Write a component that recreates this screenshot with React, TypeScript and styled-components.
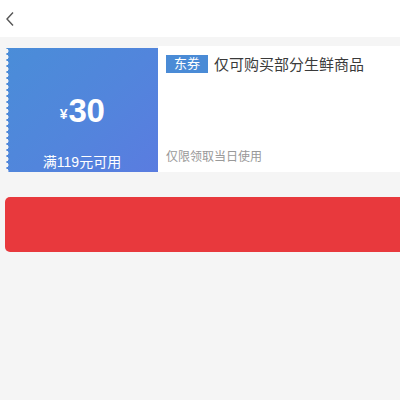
import React from "react";
import styled, { createGlobalStyle } from "styled-components";

const GlobalStyle = createGlobalStyle`
  html, body {
    margin: 0;
    padding: 0;
    background: #f5f5f5;
    font-family: "Liberation Sans", "Noto Sans CJK SC", sans-serif;
  }
`;

const Page = styled.div`
  width: 400px;
  height: 400px;
  background: #f5f5f5;
  overflow: hidden;
`;

const Header = styled.div`
  height: 37px;
  background: #ffffff;
  display: flex;
  align-items: center;
  padding-left: 5px;
`;

const BackButton = styled.button`
  border: none;
  background: transparent;
  padding: 0;
  width: 14px;
  height: 20px;
  display: flex;
  align-items: center;
  cursor: pointer;
`;

const Coupon = styled.div`
  display: flex;
  margin: 11px 0 0 6px;
  height: 124px;
`;

// blue left part with a scalloped edge
const Amount = styled.div`
  position: relative;
  width: 152px;
  flex-shrink: 0;
  background: linear-gradient(135deg, #4a8dd8 0%, #5285dc 55%, #5a7ce0 100%);
  color: #ffffff;
  display: flex;
  flex-direction: column;
  align-items: center;

  &::before {
    content: "";
    position: absolute;
    left: 0;
    top: 0;
    bottom: 0;
    width: 4px;
    background-image: radial-gradient(circle at 0 3px, #f5f5f5 2.2px, transparent 2.8px);
    background-size: 4px 6px;
    background-repeat: repeat-y;
  }
`;

const Price = styled.div`
  margin-top: 44px;
  display: flex;
  align-items: baseline;
  font-family: "Liberation Sans", sans-serif;
  font-weight: bold;
`;

const Currency = styled.span`
  font-size: 14px;
  margin-right: 1px;
  position: relative;
  top: -3px;
`;

const Value = styled.span`
  font-size: 33px;
  letter-spacing: -0.5px;
`;

const Condition = styled.div`
  margin-top: auto;
  margin-bottom: 1px;
  font-size: 14px;
  line-height: 18px;
`;

const Info = styled.div`
  flex: 1;
  background: #ffffff;
  margin-top: -2px;
  padding: 7px 8px 8px 8px;
  display: flex;
  flex-direction: column;
`;

const TitleRow = styled.div`
  display: flex;
  align-items: center;
`;

const Tag = styled.span`
  background: #4a8bd6;
  color: #ffffff;
  font-size: 13px;
  line-height: 18px;
  padding: 0 8px;
  margin-right: 6px;
`;

const Title = styled.span`
  font-size: 15px;
  color: #3a3a3a;
`;

const Note = styled.div`
  margin-top: auto;
  font-size: 12px;
  color: #999999;
`;

const SubmitButton = styled.button`
  display: block;
  margin: 25px 0 0 5px;
  width: 410px;
  height: 55px;
  border: none;
  border-radius: 5px;
  background: #e8393d;
`;

export default function App() {
  return (
    <Page>
      <GlobalStyle />
      <Header>
        <BackButton aria-label="back">
          <svg width="10" height="16" viewBox="0 0 10 16">
            <path d="M8 1.5 L2 8 L8 14.5" fill="none" stroke="#555" strokeWidth="1.4" />
          </svg>
        </BackButton>
      </Header>
      <Coupon>
        <Amount>
          <Price>
            <Currency>¥</Currency>
            <Value>30</Value>
          </Price>
          <Condition>满119元可用</Condition>
        </Amount>
        <Info>
          <TitleRow>
            <Tag>东券</Tag>
            <Title>仅可购买部分生鲜商品</Title>
          </TitleRow>
          <Note>仅限领取当日使用</Note>
        </Info>
      </Coupon>
      <SubmitButton />
    </Page>
  );
}
